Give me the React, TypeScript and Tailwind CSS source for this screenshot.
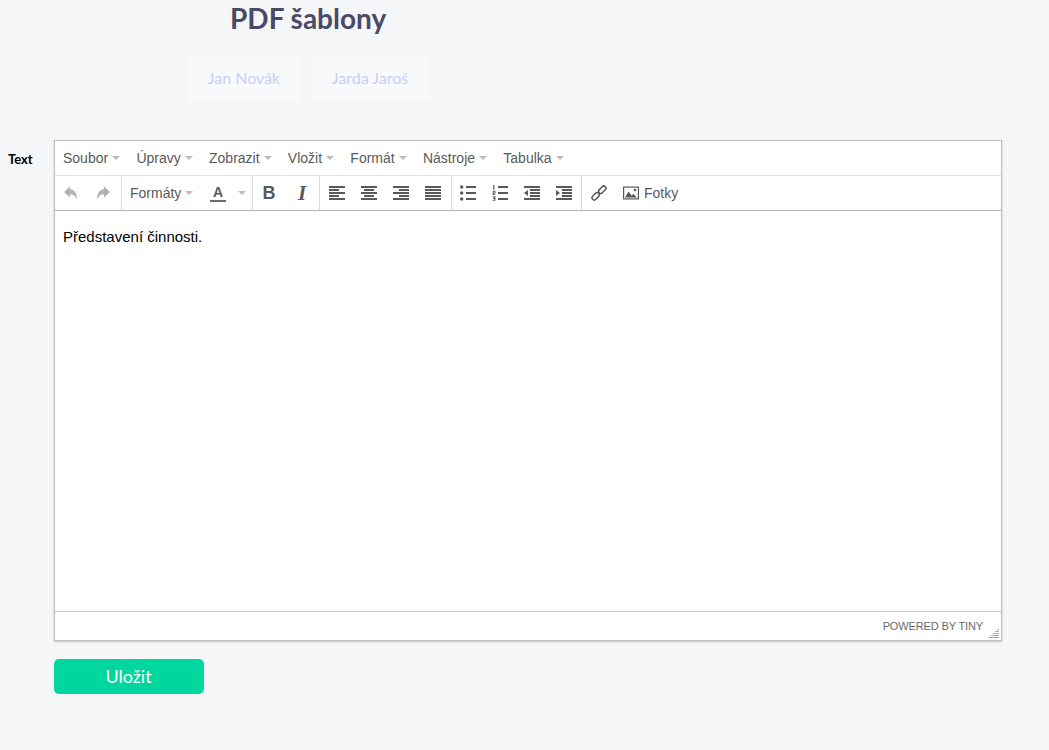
import React from "react";

const Caret = ({ className = "" }: { className?: string }) => (
  <span className={"inline-block w-0 h-0 border-x-4 border-x-transparent border-t-4 border-t-[#bbbbbb] " + className} />
);

const menu = ["Soubor", "Úpravy", "Zobrazit", "Vložit", "Formát", "Nástroje", "Tabulka"];

const Icon = ({ children }: { children: React.ReactNode }) => (
  <svg width="16" height="16" viewBox="0 0 16 16" fill="#595959" shapeRendering="crispEdges">
    {children}
  </svg>
);

const Smooth = ({ children, fill = "#595959" }: { children: React.ReactNode; fill?: string }) => (
  <svg width="16" height="16" viewBox="0 0 16 16" fill={fill}>
    {children}
  </svg>
);

const Lines = ({ rows }: { rows: [number, number, number][] }) => (
  <Icon>
    {rows.map(([x, y, w], i) => (
      <rect key={i} x={x} y={y} width={w} height="2" />
    ))}
  </Icon>
);

const Btn = ({ children }: { children: React.ReactNode }) => (
  <div className="w-8 h-full flex items-center justify-center">{children}</div>
);

const Group = ({ children, className = "" }: { children: React.ReactNode; className?: string }) => (
  <div className={"h-full flex items-center border-r border-[#d9d9d9] " + className}>{children}</div>
);

export default function App() {
  return (
    <div className="min-h-[750px] bg-[#f5f6f8] font-['Lato','Liberation_Sans',sans-serif] pb-14">
      <h1 className="pl-[230px] text-[28px] leading-[36px] font-bold text-[#4a4a68]">PDF šablony</h1>
      <div className="flex gap-3 pl-[188px] mt-[21px]">
        <div className="w-[112px] h-11 pb-[2px] bg-[#f8f9fb] flex items-center justify-center text-base text-[#c9cdfb]">Jan Novák</div>
        <div className="w-[118px] h-11 pb-[2px] pr-[2px] bg-[#f8f9fb] flex items-center justify-center text-base text-[#c9cdfb]">Jarda Jaroš</div>
      </div>
      <div className="flex mt-[39px]">
        <label className="w-[54px] pl-2 pt-[11px] text-[13px] leading-4 font-bold text-black">Text</label>
        <div className="w-[948px] h-[501px] flex flex-col bg-white border border-[#bfbfbf] shadow-[0_1px_2px_rgba(0,0,0,0.2)] font-['Liberation_Sans',Arial,sans-serif]">
          <div className="h-[35px] shrink-0 flex items-center pl-2 gap-[16.25px] border-b border-[#e3e3e3] text-sm text-[#595959]">
            {menu.map((m) => (
              <span key={m} className="flex items-center gap-1">
                {m}
                <Caret />
              </span>
            ))}
          </div>
          <div className="h-[35px] shrink-0 flex items-center border-b border-[#b3b3b3] text-sm text-[#595959]">
            <Group className="w-[67px]">
              <Btn>
                <Smooth fill="#b3b3b3">
                  <path d="M7 1.500 1 7l6 5.500V9.200c3.500 0 5.500 1.600 6.500 5.300.9-6-2-9.800-6.500-10.200V1.500Z" />
                </Smooth>
              </Btn>
              <Btn>
                <Smooth fill="#b3b3b3">
                  <path d="M9 1.500 15 7l-6 5.500V9.200c-3.500 0-5.500 1.600-6.500 5.300-.9-6 2-9.800 6.500-10.200V1.500Z" />
                </Smooth>
              </Btn>
            </Group>
            <Group className="w-[131px] pl-2">
              <span className="flex items-center gap-1 w-[80px]">
                Formáty
                <Caret />
              </span>
              <span className="w-[16px] flex flex-col items-center">
                <span className="text-sm leading-[14px] font-bold text-[#595959]">A</span>
                <span className="w-4 h-[2px] bg-[#6e6e6e] mt-[1px]" />
              </span>
              <Caret className="ml-3" />
            </Group>
            <Group className="w-[67px]">
              <Btn>
                <span className="font-['Liberation_Sans',sans-serif] text-lg font-bold text-[#595959]">B</span>
              </Btn>
              <Btn>
                <span className="pl-[2px] font-['Liberation_Serif',serif] text-[21px] font-bold italic text-[#595959]">I</span>
              </Btn>
            </Group>
            <Group className="w-[132px] pl-px">
              <Btn>
                <Lines rows={[[0, 1, 16], [0, 4, 10], [0, 7, 16], [0, 10, 10], [0, 13, 16]]} />
              </Btn>
              <Btn>
                <Lines rows={[[0, 1, 16], [3, 4, 10], [0, 7, 16], [3, 10, 10], [0, 13, 16]]} />
              </Btn>
              <Btn>
                <Lines rows={[[0, 1, 16], [6, 4, 10], [0, 7, 16], [6, 10, 10], [0, 13, 16]]} />
              </Btn>
              <Btn>
                <Lines rows={[[0, 1, 16], [0, 4, 16], [0, 7, 16], [0, 10, 16], [0, 13, 16]]} />
              </Btn>
            </Group>
            <Group className="w-[130px]">
              <Btn>
                <Icon>
                  <circle cx="1.700" cy="2" r="1.700" shapeRendering="auto" />
                  <circle cx="1.700" cy="8" r="1.700" shapeRendering="auto" />
                  <circle cx="1.700" cy="14" r="1.700" shapeRendering="auto" />
                  <rect x="6" y="1" width="10" height="2" />
                  <rect x="6" y="7" width="10" height="2" />
                  <rect x="6" y="13" width="10" height="2" />
                </Icon>
              </Btn>
              <Btn>
                <svg width="16" height="16" viewBox="0 0 16 16" fill="#595959">
                  <path d="M1 .3h1.500v4.400H1.300V1.300H1V.3ZM.6 5.800h2.800v2.600H1.800v.8h1.600v.9H.6V7.600h1.600v-.9H.6v-.9ZM.6 11.300h2.800v4.500H.6v-.9h1.600v-.9H1.100v-.9h1.100v-.9H.6v-.9Z" />
                  <rect x="6" y="1" width="10" height="2" />
                  <rect x="6" y="7" width="10" height="2" />
                  <rect x="6" y="13" width="10" height="2" />
                </svg>
              </Btn>
              <Btn>
                <Icon>
                  <rect x="0" y="1" width="16" height="2" />
                  <rect x="6" y="4" width="10" height="2" />
                  <rect x="6" y="7" width="10" height="2" />
                  <rect x="6" y="10" width="10" height="2" />
                  <rect x="0" y="13" width="16" height="2" />
                  <path d="M4 5v6L0 8l4-3Z" shapeRendering="auto" />
                </Icon>
              </Btn>
              <Btn>
                <Icon>
                  <rect x="0" y="1" width="16" height="2" />
                  <rect x="6" y="4" width="10" height="2" />
                  <rect x="6" y="7" width="10" height="2" />
                  <rect x="6" y="10" width="10" height="2" />
                  <rect x="0" y="13" width="16" height="2" />
                  <path d="M0 5v6l4-3-4-3Z" shapeRendering="auto" />
                </Icon>
              </Btn>
            </Group>
            <div className="h-full flex items-center pl-px">
              <Btn>
                <svg width="16" height="16" viewBox="0 0 16 16" fill="none" stroke="#595959" strokeWidth="1.500">
                  <rect x="-4.300" y="-2.200" width="8.600" height="4.400" rx="2.200" transform="translate(4.700 11.300) rotate(-45)" />
                  <rect x="-4.300" y="-2.200" width="8.600" height="4.400" rx="2.200" transform="translate(11.300 4.700) rotate(-45)" />
                </svg>
              </Btn>
              <Btn>
                <svg width="16" height="16" viewBox="0 0 16 16">
                  <rect x="0.600" y="2.100" width="14.800" height="11.800" fill="none" stroke="#595959" strokeWidth="1.200" />
                  <path d="M2 12.500l3.500-6 3 4 2-1.500 3.500 3.500H2Z" fill="#595959" />
                  <circle cx="12" cy="5" r="1.300" fill="#595959" />
                </svg>
              </Btn>
              <span className="-ml-[3px]">Fotky</span>
            </div>
          </div>
          <div className="flex-1 px-2 pt-4 text-[15px] leading-5 text-black">Představení činnosti.</div>
          <div className="h-[29px] shrink-0 flex items-center justify-end border-t border-[#c9c9c9] pr-[18px] relative">
            <span className="text-[11px] tracking-[-0.13px] text-[#6a6a6a]">POWERED BY TINY</span>
            <svg className="absolute right-[2px] bottom-[2px]" width="10" height="10" viewBox="0 0 10 10" stroke="#aaaaaa" strokeWidth="1" shapeRendering="crispEdges">
              <path d="M7.500 1.500h2M5.500 3.500h4M3.500 5.500h6M1.500 7.500h8M0 9.500h10" />
            </svg>
          </div>
        </div>
      </div>
      <button className="block ml-[54px] mt-[18px] w-[150px] h-[35px] pb-[2px] pr-[1px] rounded-[5px] bg-[#00d79e] text-white text-lg font-normal">Uložit</button>
    </div>
  );
}
